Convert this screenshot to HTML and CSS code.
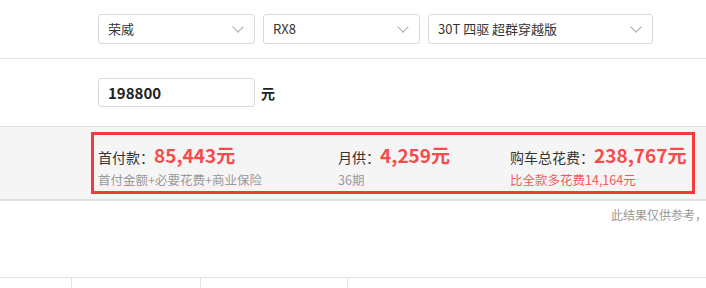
FILE: index.html
```html
<!DOCTYPE html>
<html lang="zh-CN">
<head>
    <meta charset="UTF-8">
    <title>购车计算器</title>
    <link rel="stylesheet" href="styles.css">
</head>
<body>
    <div class="page">
        <div class="row row-car">
            <div class="select sel-brand">荣威<span class="arrow"></span></div>
            <div class="select sel-series">RX8<span class="arrow"></span></div>
            <div class="select sel-model">30T 四驱 超群穿越版<span class="arrow"></span></div>
        </div>
        <div class="row row-price">
            <div class="price-input">198800</div>
            <span class="unit">元</span>
        </div>
        <div class="result">
            <div class="result-box">
                <div class="col col-first">
                    <div class="main">首付款：<b>85,443元</b></div>
                    <div class="sub">首付金额+必要花费+商业保险</div>
                </div>
                <div class="col col-month">
                    <div class="main">月供：<b>4,259元</b></div>
                    <div class="sub">36期</div>
                </div>
                <div class="col col-total">
                    <div class="main">购车总花费：<b>238,767元</b></div>
                    <div class="sub red">比全款多花费14,164元</div>
                </div>
            </div>
        </div>
        <div class="note">此结果仅供参考，</div>
        <div class="table-head">
            <div class="cell c1"></div>
            <div class="cell c2"></div>
            <div class="cell c3"></div>
            <div class="cell c4"></div>
        </div>
    </div>
</body>
</html>
```

FILE: styles.css
```css
body {
    margin: 0;
    font-family: "Microsoft YaHei", "Noto Sans CJK SC", sans-serif;
    color: #333;
    background-color: #fff;
    overflow: hidden;
}
.page {
    width: 706px;
    height: 288px;
    overflow: hidden;
}
.row {
    display: flex;
    align-items: center;
    padding-left: 98px;
}
.row-car {
    height: 58px;
    gap: 8px;
    border-bottom: 1px solid #e3e3e3;
}
.select {
    position: relative;
    box-sizing: border-box;
    height: 30px;
    line-height: 28px;
    padding-left: 9px;
    border: 1px solid #d9d9d9;
    border-radius: 3px;
    font-size: 13px;
    color: #333;
    white-space: nowrap;
}
.sel-brand, .sel-series {
    width: 157px;
}
.sel-model {
    width: 225px;
}
.arrow {
    position: absolute;
    right: 12px;
    top: 8px;
    width: 7px;
    height: 7px;
    border-right: 1px solid #aaa;
    border-bottom: 1px solid #aaa;
    transform: rotate(45deg);
}
.row-price {
    height: 67px;
}
.price-input {
    box-sizing: border-box;
    width: 157px;
    height: 29px;
    line-height: 27px;
    padding-left: 9px;
    border: 1px solid #d9d9d9;
    border-radius: 3px;
    font-size: 15px;
    font-weight: bold;
    color: #222;
}
.unit {
    margin-left: 6px;
    font-size: 14px;
    font-weight: bold;
    color: #222;
}
.result {
    height: 67px;
    padding-top: 5px;
    background-color: #f5f5f5;
    border-top: 1px solid #dedede;
    border-bottom: 2px solid #dedede;
}
.result-box {
    box-sizing: border-box;
    display: flex;
    width: 604px;
    height: 62px;
    margin-left: 91px;
    padding: 9px 0 0 4px;
    border: 3px solid #f43a3a;
}
.col-first {
    width: 240px;
}
.col-month {
    width: 172px;
}
.main {
    font-size: 14px;
    line-height: 22px;
    color: #333;
    white-space: nowrap;
}
.main b {
    font-size: 19px;
    color: #f84b4b;
}
.sub {
    margin-top: 4px;
    font-size: 12.5px;
    line-height: 16px;
    color: #999;
    white-space: nowrap;
}
.sub.red {
    color: #f65a5a;
}
.note {
    height: 30px;
    padding-left: 611px;
    padding-top: 5px;
    box-sizing: border-box;
    font-size: 12px;
    line-height: 18px;
    color: #999;
    white-space: nowrap;
}
.table-head {
    display: flex;
    margin-top: 46px;
    height: 20px;
    border-top: 1px solid #e3e3e3;
}
.cell {
    height: 20px;
    border-right: 1px solid #e3e3e3;
}
.c1 { width: 71px; }
.c2 { width: 128px; }
.c3 { width: 146px; }
.c4 { flex: 1; border-right: none; }
```
